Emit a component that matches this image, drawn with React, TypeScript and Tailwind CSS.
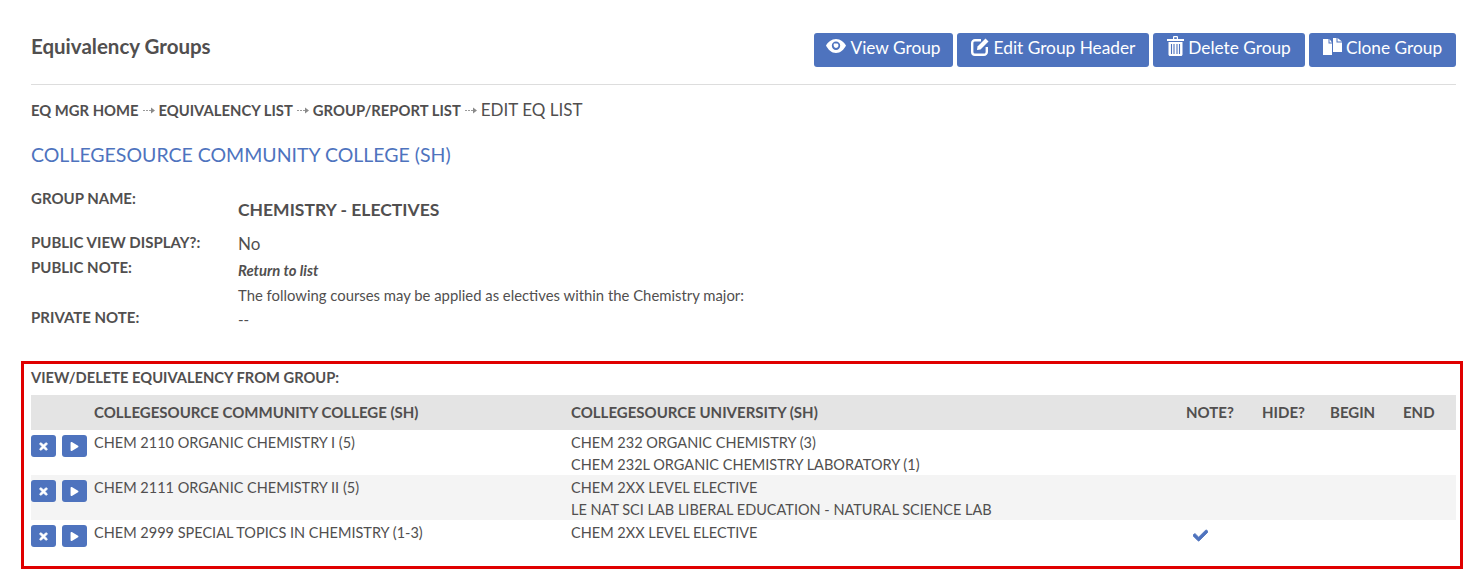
import { FaTimes, FaPlay, FaCheck } from 'react-icons/fa';
import type { ReactNode } from 'react';

const font = "font-['Lato','Open_Sans',sans-serif]";

// Iconos de los botones de cabecera
function EyeIcon() {
  return (
    <svg width="20" height="14" viewBox="0 0 20 14" className="-mt-[3px]">
      <path
        fill="white"
        fillRule="evenodd"
        d="M10 0C5.5 0 2 3 0 6.5 2 10.5 5.5 14 10 14s8-3.500 10-7.500C18 3 14.500 0 10 0ZM10 2.500a4.200 4.200 0 1 1 0 8.400 4.200 4.200 0 0 1 0-8.400Z"
      />
      <path fill="white" d="M8 4.500h3.500a2.500 2.500 0 0 1-1.500 4.500 3 3 0 0 1-2-4.500Z" />
    </svg>
  );
}

function EditIcon() {
  return (
    <svg width="19" height="19" viewBox="0 0 19 19" className="-mt-[3px]">
      <path
        fill="none"
        stroke="white"
        strokeWidth="2.400"
        d="M10 3.200H4a2.800 2.800 0 0 0-2.800 2.800v9A2.800 2.800 0 0 0 4 17.800h9a2.800 2.800 0 0 0 2.800-2.800V10"
      />
      <path fill="white" d="M6.500 9.500 14.500 1.500 17.500 4.500 9.500 12.500 6 13Z" />
    </svg>
  );
}

function TrashIcon() {
  return (
    <svg width="17" height="20" viewBox="0 0 17 20" className="-mt-[3px]">
      <path fill="white" d="M0 3h6V1.200C6 .5 6.500 0 7.200 0h2.600c.7 0 1.200.5 1.200 1.200V3h6v2H0ZM7.200 1.200V3h2.600V1.200Z" fillRule="evenodd" />
      <path fill="white" d="M1.500 6h14v12.500c0 .8-.7 1.500-1.500 1.500H3c-.8 0-1.500-.7-1.500-1.500Z" />
      <path stroke="#4e73be" strokeWidth="1.100" d="M4.500 8v10M7 8v10M10 8v10M12.500 8v10" />
    </svg>
  );
}

function CopyIcon() {
  return (
    <svg width="19" height="17" viewBox="0 0 19 17" className="-mt-[3px]">
      <path fill="white" d="M0 1h5.500v4.500H9V17H0ZM6.500 1 9 4.500H6.500Z" />
      <path fill="white" d="M10 0h3.500v4.500H19V14h-9ZM14.500 0 19 3.500h-4.500Z" />
    </svg>
  );
}

function HeaderButton({ icon, label, width }: { icon: ReactNode; label: string; width: string }) {
  return (
    <button className={`${width} h-[34px] bg-[#4e73be] text-white text-[17.3px] rounded-[3px] flex items-center justify-center gap-[4px] pb-[5px]`}>
      {icon}
      <span>{label}</span>
    </button>
  );
}

function Crumb({ children }: { children: ReactNode }) {
  return <span className="font-bold text-[14.8px] text-[#514f4f]">{children}</span>;
}

function Arrow() {
  return (
    <svg width="12" height="7" viewBox="0 0 12 7" className="mx-[4px]">
      <path stroke="#9a9a9a" strokeWidth="1" strokeDasharray="2 1" d="M0 3.500h8" />
      <path fill="#8a8a8a" d="M8 .5 12 3.500 8 6.500Z" />
    </svg>
  );
}

function Row({ a, b, c, check, shade }: { a: string; b: string; c?: string; check?: boolean; shade?: boolean }) {
  return (
    <div className={`grid grid-cols-[63px_477px_615px_76px_68px_73px_53px] h-[45px] text-[14.5px] text-[#514f4f] ${shade ? 'bg-[#f4f4f4]' : ''}`}>
      <div className="flex gap-[6px] pt-[5px]">
        <button className="w-[25px] h-[22px] bg-[#4e73be] rounded-[3px] text-white flex items-center justify-center">
          <FaTimes size={11} stroke="currentColor" strokeWidth={40} />
        </button>
        <button className="w-[25px] h-[22px] bg-[#4e73be] rounded-[3px] text-white flex items-center justify-center">
          <FaPlay size={9} />
        </button>
      </div>
      <div className="leading-[22px] pt-[2px]">{a}</div>
      <div className="leading-[22px] pt-[2px]">
        <div>{b}</div>
        {c && <div>{c}</div>}
      </div>
      <div className="pl-[7px] pt-[8px] text-[#4e73be]">
        {check && <FaCheck size={15} stroke="currentColor" strokeWidth={30} />}
      </div>
    </div>
  );
}

export default function App() {
  return (
    <div className={`${font} w-[1476px] h-[580px] overflow-hidden bg-white pl-[21px] pr-[13px] pt-[33px]`}>
      <div className="pl-[10px] pr-[7px]">
        <div className="flex justify-between h-[52px] border-b border-[#dddddd]">
          <h1 className="text-[20.5px] font-bold text-[#514f4f] leading-[26px]">Equivalency Groups</h1>
          <div className="flex gap-[4px] h-[34px]">
            <HeaderButton icon={<EyeIcon />} label="View Group" width="w-[139px]" />
            <HeaderButton icon={<EditIcon />} label="Edit Group Header" width="w-[192px]" />
            <HeaderButton icon={<TrashIcon />} label="Delete Group" width="w-[152px]" />
            <HeaderButton icon={<CopyIcon />} label="Clone Group" width="w-[147px]" />
          </div>
        </div>

        <div className="flex items-center h-[22px] mt-[14px]">
          <Crumb>EQ MGR HOME</Crumb>
          <Arrow />
          <Crumb>EQUIVALENCY LIST</Crumb>
          <Arrow />
          <Crumb>GROUP/REPORT LIST</Crumb>
          <Arrow />
          <span className="text-[17px] text-[#514f4f]">EDIT EQ LIST</span>
        </div>

        <h2 className="text-[19.5px] text-[#4e73be] leading-[28px] mt-[20px]">COLLEGESOURCE COMMUNITY COLLEGE (SH)</h2>

        <div className="grid grid-cols-[207px_1fr] text-[#514f4f] mt-[19px]">
          <div className="font-bold text-[15px] leading-[20px]">GROUP NAME:</div>
          <div className="font-bold text-[17.500px] leading-[24px] pt-[10px] h-[42px]">CHEMISTRY - ELECTIVES</div>
          <div className="font-bold text-[15px] leading-[20px] pt-[2px] h-[27px]">PUBLIC VIEW DISPLAY?:</div>
          <div className="text-[17px] leading-[24px] pt-[2px] h-[27px]">No</div>
          <div className="font-bold text-[15px] leading-[20px]">PUBLIC NOTE:</div>
          <div className="text-[14.850px] leading-[25px] pt-[1px] h-[53px]">
            <div className="font-bold italic">Return to list</div>
            <div>The following courses may be applied as electives within the Chemistry major:</div>
          </div>
          <div className="font-bold text-[15px] leading-[20px] -mt-[3px]">PRIVATE NOTE:</div>
          <div className="text-[15px] leading-[20px] -mt-[1px]">--</div>
        </div>
      </div>

      <div className="border-[3px] border-[#e00000] h-[208px] mt-[32px] pl-[7px] pr-[4px]">
        <div className="font-bold text-[14.700px] text-[#514f4f] leading-[20px] pt-[3px] h-[31px]">VIEW/DELETE EQUIVALENCY FROM GROUP:</div>
        <div className="grid grid-cols-[63px_477px_615px_76px_68px_73px_53px] h-[35px] items-center bg-[#e4e4e4] font-bold text-[15px] text-[#514f4f]">
          <div />
          <div>COLLEGESOURCE COMMUNITY COLLEGE (SH)</div>
          <div>COLLEGESOURCE UNIVERSITY (SH)</div>
          <div>NOTE?</div>
          <div>HIDE?</div>
          <div>BEGIN</div>
          <div>END</div>
        </div>
        <Row a="CHEM 2110 ORGANIC CHEMISTRY I (5)" b="CHEM 232 ORGANIC CHEMISTRY (3)" c="CHEM 232L ORGANIC CHEMISTRY LABORATORY (1)" />
        <Row shade a="CHEM 2111 ORGANIC CHEMISTRY II (5)" b="CHEM 2XX LEVEL ELECTIVE" c="LE NAT SCI LAB LIBERAL EDUCATION - NATURAL SCIENCE LAB" />
        <Row check a="CHEM 2999 SPECIAL TOPICS IN CHEMISTRY (1-3)" b="CHEM 2XX LEVEL ELECTIVE" />
      </div>
    </div>
  );
}
